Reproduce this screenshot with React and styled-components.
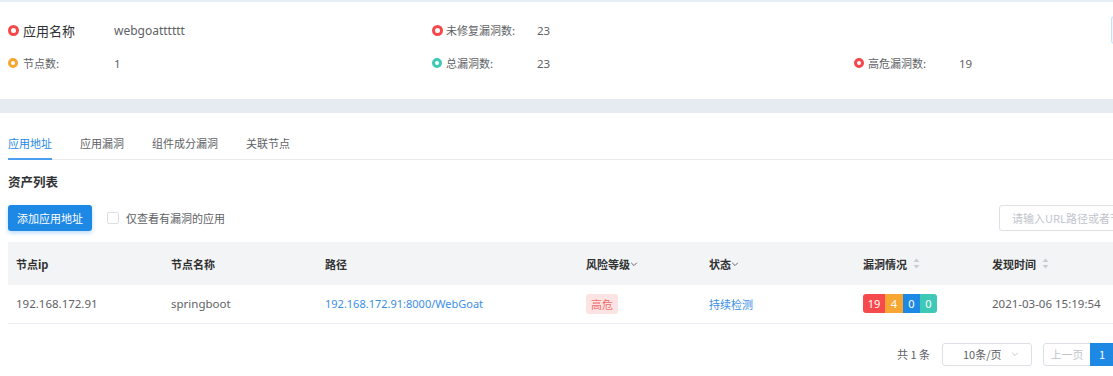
import React from "react";
import styled, { createGlobalStyle } from "styled-components";

const Global = createGlobalStyle`
  html, body { margin: 0; padding: 0; background: #fff; overflow: hidden; }
  body { font-family: "Noto Sans", "Noto Sans CJK SC", sans-serif; color: #606266; }
  * { box-sizing: border-box; }
`;

const Page = styled.div`
  width: 1169px;
  display: flex;
  flex-direction: column;
`;

const TopStrip = styled.div`
  height: 2px;
  background: #e6eef7;
`;

const InfoCard = styled.div`
  height: 96px;
  padding: 12px 0 0 8px;
  display: grid;
  grid-template-columns: 424px 422px 257px auto;
  grid-auto-rows: 32px;
  row-gap: 1px;
  background: #fff;
`;

const InfoItem = styled.div`
  display: grid;
  grid-template-columns: ${(p) => p.$icon}px ${(p) => p.$label}px auto;
  align-items: center;
  grid-column: ${(p) => p.$col};
  grid-row: ${(p) => p.$row};
`;

const Ring = styled.span`
  width: ${(p) => p.$size}px;
  height: ${(p) => p.$size}px;
  border-radius: 50%;
  border: 3px solid ${(p) => p.$color};
`;

const Label = styled.span`
  font-size: ${(p) => (p.$big ? 13 : 11)}px;
  color: ${(p) => (p.$big ? "#303133" : "#606266")};
  font-family: "Noto Sans CJK SC", sans-serif;
`;

const Value = styled.span`
  font-size: ${(p) => (p.$big ? 12 : 11.5)}px;
  color: #606266;
`;

const EdgeButton = styled.div`
  grid-column: 4;
  grid-row: 1;
  margin-top: 2px;
  height: 28px;
  width: 60px;
  border: 1px solid #c6e0fb;
  background: #eef6ff;
  border-radius: 3px;
`;

const GrayBand = styled.div`
  height: 14px;
  margin-top: 1px;
  background: #e6ebf2;
`;

const Main = styled.div`
  padding: 0 8px;
  display: flex;
  flex-direction: column;
`;

const TabList = styled.div`
  margin-top: 19px;
  display: flex;
  gap: 28px;
  border-bottom: 1px solid #e8eaee;
`;

const Tab = styled.div`
  font-family: "Noto Sans CJK SC", sans-serif;
  font-size: 11px;
  line-height: 22px;
  padding-bottom: 4px;
  margin-bottom: -1px;
  color: ${(p) => (p.$active ? "#1e88e5" : "#606266")};
  border-bottom: 2px solid ${(p) => (p.$active ? "#4c9ff0" : "transparent")};
`;

const Title = styled.div`
  margin-top: 12px;
  font-family: "Noto Sans CJK SC", sans-serif;
  font-size: 12.5px;
  font-weight: 700;
  line-height: 20px;
  color: #303133;
`;

const Toolbar = styled.div`
  margin-top: 13px;
  height: 26px;
  display: flex;
  align-items: center;
`;

const PrimaryButton = styled.button`
  height: 26px;
  width: 84px;
  border: none;
  border-radius: 3px;
  background: #1e88e5;
  color: #fff;
  font-family: "Noto Sans CJK SC", sans-serif;
  font-size: 11px;
  padding: 0;
  box-shadow: 0 2px 4px rgba(30, 136, 229, 0.3);
`;

const CheckLabel = styled.label`
  margin-left: 15px;
  display: flex;
  align-items: center;
  gap: 7px;
  font-family: "Noto Sans CJK SC", sans-serif;
  font-size: 11px;
  color: #606266;
`;

const CheckBox = styled.span`
  width: 12px;
  height: 12px;
  border: 1px solid #dcdfe6;
  border-radius: 2px;
  background: #fff;
`;

const Search = styled.div`
  margin-left: auto;
  width: 162px;
  height: 26px;
  border: 1px solid #dcdfe6;
  border-radius: 3px;
  display: flex;
  align-items: center;
  padding-left: 12px;
  font-family: "Noto Sans CJK SC", sans-serif;
  font-size: 11px;
  color: #c0c4cc;
  white-space: nowrap;
  overflow: hidden;
`;

const Table = styled.table`
  margin-top: 11px;
  width: 100%;
  border-collapse: collapse;
  table-layout: fixed;
`;

const Th = styled.th`
  height: 43px;
  background: #f3f4f5;
  text-align: left;
  padding: 0 8px;
  font-family: "Noto Sans CJK SC", sans-serif;
  font-size: 11px;
  font-weight: 700;
  color: #303133;
  white-space: nowrap;
`;

const Td = styled.td`
  height: 38px;
  padding: 0 8px;
  border-bottom: 1px solid #ebeef5;
  font-size: 11.5px;
  color: #606266;
  white-space: nowrap;
`;

const HeadInner = styled.span`
  display: inline-flex;
  align-items: center;
  gap: ${(p) => p.$gap || 0}px;
`;

const Link = styled.span`
  color: #3a8ee6;
  font-family: ${(p) => (p.$cjk ? '"Noto Sans CJK SC", sans-serif' : "inherit")};
  font-size: 11px;
`;

const RiskTag = styled.span`
  display: inline-flex;
  align-items: center;
  justify-content: center;
  width: 32px;
  height: 20px;
  border-radius: 3px;
  background: #fde4e4;
  color: #f56c6c;
  font-family: "Noto Sans CJK SC", sans-serif;
  font-size: 11px;
`;

const Counts = styled.span`
  display: inline-flex;
  height: 19px;
  border-radius: 3px;
  overflow: hidden;
`;

const Count = styled.span`
  width: ${(p) => p.$w}px;
  display: flex;
  align-items: center;
  justify-content: center;
  background: ${(p) => p.$bg};
  color: #fff;
  font-size: 11px;
`;

const Pager = styled.div`
  margin-top: 19px;
  display: flex;
  justify-content: flex-end;
  align-items: center;
  font-family: "Noto Sans CJK SC", sans-serif;
  font-size: 11px;
`;

const Total = styled.span`
  color: #606266;
  margin-right: 12px;
`;

const PageSize = styled.div`
  width: 90px;
  height: 23px;
  border: 1px solid #dcdfe6;
  border-radius: 3px;
  display: flex;
  align-items: center;
  padding-left: 20px;
  gap: 9px;
  color: #606266;
  margin-right: 11px;
`;

const PageBtn = styled.div`
  height: 23px;
  width: ${(p) => p.$w}px;
  display: flex;
  align-items: center;
  justify-content: center;
  border: 1px solid ${(p) => (p.$active ? "#1e88e5" : "#dcdfe6")};
  background: ${(p) => (p.$active ? "#1e88e5" : "#fff")};
  color: ${(p) => (p.$active ? "#fff" : "#c0c4cc")};
  border-radius: ${(p) => p.$radius || "0"};
  margin-left: ${(p) => (p.$join ? -1 : 0)}px;
`;

const Chevron = ({ size = 8, color = "#606266" }) => (
  <svg width={size} height={size} viewBox="0 0 10 10">
    <path d="M1.5 3.5 L5 7 L8.5 3.5" fill="none" stroke={color} strokeWidth="1.2" />
  </svg>
);

const SortCarets = () => (
  <svg width="7" height="11" viewBox="0 0 7 11">
    <path d="M3.5 0.5 L6.5 4 L0.5 4 Z" fill="#c8ccd3" />
    <path d="M3.5 10.5 L6.5 7 L0.5 7 Z" fill="#c8ccd3" />
  </svg>
);

const info = [
  { col: 1, row: 1, color: "#f5484a", label: "应用名称", value: "webgoatttttt", big: true },
  { col: 2, row: 1, color: "#f5484a", label: "未修复漏洞数:", value: "23" },
  { col: 1, row: 2, color: "#f7a531", label: "节点数:", value: "1" },
  { col: 2, row: 2, color: "#3ec9b6", label: "总漏洞数:", value: "23" },
  { col: 3, row: 2, color: "#f5484a", label: "高危漏洞数:", value: "19" },
];

const tabs = ["应用地址", "应用漏洞", "组件成分漏洞", "关联节点"];

export default function App() {
  return (
    <>
      <Global />
      <Page>
        <TopStrip />
        <InfoCard>
          {info.map((it) => (
            <InfoItem key={it.label} $col={it.col} $row={it.row} $icon={it.col === 1 ? 15 : 14} $label={91}>
              <Ring $size={it.row === 1 ? 11 : 10} $color={it.color} />
              <Label $big={it.big}>{it.label}</Label>
              <Value $big={it.big}>{it.value}</Value>
            </InfoItem>
          ))}
          <EdgeButton />
        </InfoCard>
        <GrayBand />
        <Main>
          <TabList>
            {tabs.map((t, i) => (
              <Tab key={t} $active={i === 0}>{t}</Tab>
            ))}
          </TabList>
          <Title>资产列表</Title>
          <Toolbar>
            <PrimaryButton>添加应用地址</PrimaryButton>
            <CheckLabel>
              <CheckBox />
              仅查看有漏洞的应用
            </CheckLabel>
            <Search>请输入URL路径或者节点名称</Search>
          </Toolbar>
          <Table>
            <colgroup>
              <col style={{ width: 155 }} />
              <col style={{ width: 154 }} />
              <col style={{ width: 261 }} />
              <col style={{ width: 123 }} />
              <col style={{ width: 154 }} />
              <col style={{ width: 129 }} />
              <col />
            </colgroup>
            <thead>
              <tr>
                <Th>节点ip</Th>
                <Th>节点名称</Th>
                <Th>路径</Th>
                <Th><HeadInner>风险等级<Chevron /></HeadInner></Th>
                <Th><HeadInner>状态<Chevron /></HeadInner></Th>
                <Th><HeadInner $gap={6}>漏洞情况<SortCarets /></HeadInner></Th>
                <Th><HeadInner $gap={6}>发现时间<SortCarets /></HeadInner></Th>
              </tr>
            </thead>
            <tbody>
              <tr>
                <Td>192.168.172.91</Td>
                <Td>springboot</Td>
                <Td><Link>192.168.172.91:8000/WebGoat</Link></Td>
                <Td><RiskTag>高危</RiskTag></Td>
                <Td><Link $cjk>持续检测</Link></Td>
                <Td>
                  <Counts>
                    <Count $w={22} $bg="#f74a4d">19</Count>
                    <Count $w={18} $bg="#f8a632">4</Count>
                    <Count $w={17} $bg="#1e88e5">0</Count>
                    <Count $w={17} $bg="#3ec9b6">0</Count>
                  </Counts>
                </Td>
                <Td>2021-03-06 15:19:54</Td>
              </tr>
            </tbody>
          </Table>
          <Pager>
            <Total>共 1 条</Total>
            <PageSize>
              10条/页
              <Chevron size={8} color="#c0c4cc" />
            </PageSize>
            <PageBtn $w={48} $radius="3px 0 0 3px">上一页</PageBtn>
            <PageBtn $w={24} $active $join>1</PageBtn>
            <PageBtn $w={48} $radius="0 3px 3px 0" $join>下一页</PageBtn>
          </Pager>
        </Main>
      </Page>
    </>
  );
}
